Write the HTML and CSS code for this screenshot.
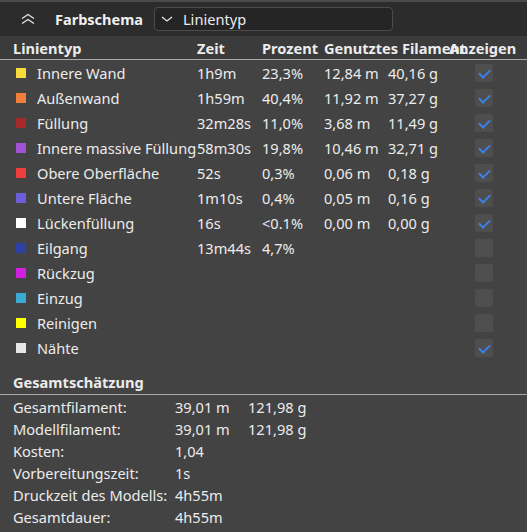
FILE: index.html
```html
<!DOCTYPE html>
<html lang="de">
<head>
<meta charset="UTF-8" />
<meta name="viewport" content="width=device-width, initial-scale=1" />
<title>Farbschema</title>
<link rel="stylesheet" href="styles.css">
</head>
<body>

<div class="panel">
  <div class="topbar">
    <span class="collapse">
      <svg width="16" height="12" viewBox="0 0 16 12"><path d="M2 5.5 L8 1.5 L14 5.5 M2 10.5 L8 6.5 L14 10.5" fill="none" stroke="#e6e6e6" stroke-width="1.3"/></svg>
    </span>
    <span class="title">Farbschema</span>
    <div class="combo">
      <svg width="12" height="8" viewBox="0 0 12 8"><path d="M1 2 L6 6 L11 2" fill="none" stroke="#e6e6e6" stroke-width="1.3"/></svg>
      <span>Linientyp</span>
    </div>
  </div>

  <div class="thead">
    <span class="h-name">Linientyp</span>
    <span class="h-time">Zeit</span>
    <span class="h-pct">Prozent</span>
    <span class="h-used">Genutztes Filament</span>
    <span class="h-show">Anzeigen</span>
  </div>

  <div class="rows">
    <div class="row"><i class="sw" style="background:#f5dc3c"></i><span>Innere Wand</span><span>1h9m</span><span>23,3%</span><span>12,84 m</span><span>40,16 g</span><b class="cb on"></b></div>
    <div class="row"><i class="sw" style="background:#f2803a"></i><span>Außenwand</span><span>1h59m</span><span>40,4%</span><span>11,92 m</span><span>37,27 g</span><b class="cb on"></b></div>
    <div class="row"><i class="sw" style="background:#a82a28"></i><span>Füllung</span><span>32m28s</span><span>11,0%</span><span>3,68 m</span><span>11,49 g</span><b class="cb on"></b></div>
    <div class="row"><i class="sw" style="background:#a052d6"></i><span>Innere massive Füllung</span><span>58m30s</span><span>19,8%</span><span>10,46 m</span><span>32,71 g</span><b class="cb on"></b></div>
    <div class="row"><i class="sw" style="background:#ef3c3c"></i><span>Obere Oberfläche</span><span>52s</span><span>0,3%</span><span>0,06 m</span><span>0,18 g</span><b class="cb on"></b></div>
    <div class="row"><i class="sw" style="background:#6b5ed6"></i><span>Untere Fläche</span><span>1m10s</span><span>0,4%</span><span>0,05 m</span><span>0,16 g</span><b class="cb on"></b></div>
    <div class="row"><i class="sw" style="background:#ffffff"></i><span>Lückenfüllung</span><span>16s</span><span>&lt;0.1%</span><span>0,00 m</span><span>0,00 g</span><b class="cb on"></b></div>
    <div class="row"><i class="sw" style="background:#2f40a6"></i><span>Eilgang</span><span>13m44s</span><span>4,7%</span><span></span><span></span><b class="cb"></b></div>
    <div class="row"><i class="sw" style="background:#d021e0"></i><span>Rückzug</span><span></span><span></span><span></span><span></span><b class="cb"></b></div>
    <div class="row"><i class="sw" style="background:#3aaad4"></i><span>Einzug</span><span></span><span></span><span></span><span></span><b class="cb"></b></div>
    <div class="row"><i class="sw" style="background:#ffff00"></i><span>Reinigen</span><span></span><span></span><span></span><span></span><b class="cb"></b></div>
    <div class="row"><i class="sw" style="background:#e6e6e6"></i><span>Nähte</span><span></span><span></span><span></span><span></span><b class="cb on"></b></div>
  </div>

  <div class="summary-title">Gesamtschätzung</div>
  <div class="summary">
    <div class="srow"><span>Gesamtfilament:</span><span>39,01 m</span><span>121,98 g</span></div>
    <div class="srow"><span>Modellfilament:</span><span>39,01 m</span><span>121,98 g</span></div>
    <div class="srow"><span>Kosten:</span><span>1,04</span><span></span></div>
    <div class="srow"><span>Vorbereitungszeit:</span><span>1s</span><span></span></div>
    <div class="srow"><span>Druckzeit des Modells:</span><span>4h55m</span><span></span></div>
    <div class="srow"><span>Gesamtdauer:</span><span>4h55m</span><span></span></div>
  </div>
</div>

</body>
</html>
```

FILE: styles.css
```css
html, body { margin: 0; background: #434343; }
body { font-family: "Noto Sans", sans-serif; font-size: 14.6px; color: #ececec; width: 527px; height: 532px; overflow: hidden; }

.panel { border-top: 2px solid #4a4a4a; }

.topbar { height: 34px; background: #2c2c2c; display: flex; align-items: center; }
.collapse { width: 16px; height: 12px; margin-left: 20px; display: flex; }
.title { margin-left: 19px; font-weight: bold; font-size: 14.5px; color: #f0f0f0; }
.combo { margin-left: 11px; width: 237px; height: 22px; background: #242424; border: 1px solid #4c4c4c; border-radius: 4px; display: flex; align-items: center; }
.combo svg { margin-left: 6px; }
.combo span { margin-left: 10px; }

.thead { height: 23px; background: #3b3b3b; border-bottom: 1px solid #a8a8a8; display: grid; grid-template-columns: 184px 65px 62px 125px 76px; padding-left: 13px; align-items: center; font-weight: bold; white-space: nowrap; }
.thead span { overflow: visible; }

.row { height: 25px; display: grid; grid-template-columns: 21px 160px 65px 62px 64px 87px 18px; padding-left: 16px; align-items: center; white-space: nowrap; }
.sw { display: block; width: 10px; height: 10px; }
.cb { display: block; width: 18px; height: 18px; background: #4e4e4e; border-radius: 2px; position: relative; }
.cb.on::after { content: ""; position: absolute; left: 4px; top: 5px; width: 9px; height: 5px; border-left: 2px solid #3d82e8; border-bottom: 2px solid #3d82e8; transform: rotate(-45deg); }

.summary-title { margin-top: 10px; padding-left: 13px; height: 24px; line-height: 24px; font-weight: bold; border-bottom: 1px solid #a8a8a8; }
.summary { padding-top: 1px; }
.srow { height: 22px; display: grid; grid-template-columns: 162px 73px auto; padding-left: 13px; align-items: center; white-space: nowrap; }
```
